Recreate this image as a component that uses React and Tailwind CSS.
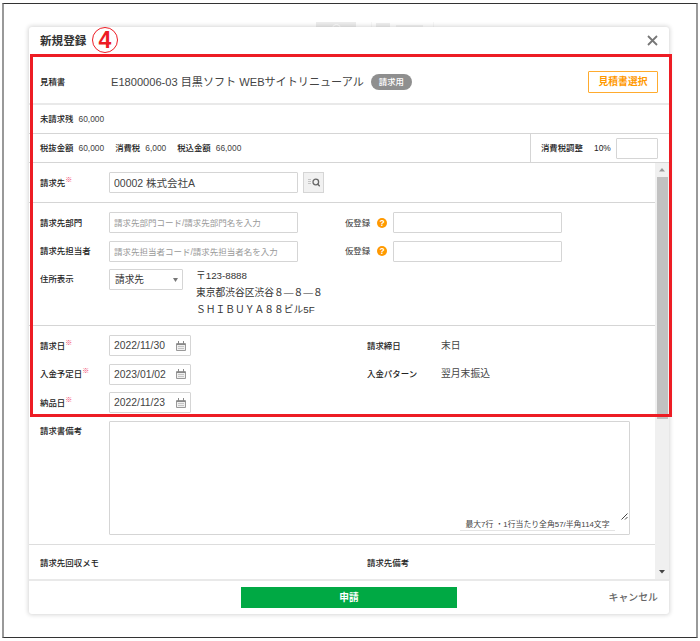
function Label({ children, required, className = "w-[69px]" }) {
  return (
    <div className={`flex shrink-0 text-[8.45px] font-medium leading-[12px] text-[#222] ${className}`}>
      {children}
      {required && <span className="-mt-[3px] text-[7px] font-bold text-[#f0436a]">※</span>}
    </div>
  );
}

function TextBox({ value, placeholder, className }) {
  return (
    <input
      type="text"
      defaultValue={value}
      placeholder={placeholder}
      className={`block h-[21px] shrink-0 rounded-[1px] border border-[#d5d5d5] bg-white px-1 text-[#444] outline-none placeholder:text-[8.5px] placeholder:text-[#999] ${className}`}
    />
  );
}

function CalendarIcon() {
  return (
    <svg width="10" height="10" viewBox="0 0 10 10" className="shrink-0">
      <path d="M0.5 2.5h9v7h-9z" fill="#efefef" stroke="#999" />
      <path d="M0.5 3.5h9M2.5 0v3M7.5 0v3" stroke="#888" />
      <path d="M2 5.5h6M2 7.5h6" stroke="#c4c4c4" />
    </svg>
  );
}

function DateBox({ value }) {
  return (
    <div className="flex h-[21px] w-[82px] shrink-0 items-center justify-between rounded-[1px] border border-[#d5d5d5] pl-1 pr-[4px] text-[10.35px] leading-[19px] text-[#444]">
      {value}
      <CalendarIcon />
    </div>
  );
}

function HelpIcon() {
  return (
    <span className="ml-[7px] flex size-[10px] shrink-0 items-center justify-center rounded-full bg-[#f90] text-[8.5px] font-bold leading-[10px] text-white">
      ?
    </span>
  );
}

function TemporaryEntry() {
  return (
    <div className="ml-[47px] flex items-center">
      <span className="w-[25px] whitespace-nowrap text-[8.4px] leading-[12px] text-[#333]">仮登録</span>
      <HelpIcon />
      <TextBox className="ml-[6px] w-[169px] text-[10px]" />
    </div>
  );
}

function Amount({ label, value }) {
  return (
    <div className="flex gap-[5px]">
      <span className="font-medium text-[#222]">{label}</span>
      <span className="text-[#444]">{value}</span>
    </div>
  );
}

function ModalHeader() {
  return (
    <>
      <div className="flex h-[27px] items-center justify-between pl-[11px] pr-[11px]">
        <h1 className="text-[11.6px] font-bold leading-[16px] text-[#333]">新規登録</h1>
        <svg width="11" height="11" viewBox="0 0 11 11">
          <path d="M1 1l9 9M10 1l-9 9" stroke="#777" strokeWidth="1.8" />
        </svg>
      </div>
      <div className="flex h-[51px] items-center border-b-2 border-[#e9e9e9] pl-[11px] pr-[11px] pt-[6px]">
        <Label className="w-[71px]">見積書</Label>
        <div className="text-[11.1px] leading-[16px] text-[#444]">E1800006-03 目黒ソフト WEBサイトリニューアル</div>
        <span className="ml-[7px] h-4 w-[41px] rounded-full bg-[#8f8f8f] text-center text-[8.4px] font-medium leading-4 text-white">
          請求用
        </span>
        <button className="ml-auto h-[22px] w-[70px] rounded-[1px] border border-[#ffab2e] text-[9.8px] font-bold leading-[20px] text-[#f90]">
          見積書選択
        </button>
      </div>
      <div className="flex h-[29px] items-center border-b border-[#d5d5d5] pl-[11px] text-[8.4px] leading-[12px]">
        <Amount label="未請求残" value="60,000" />
      </div>
      <div className="flex h-[29px] border-b border-[#d5d5d5] pl-[11px] text-[8.4px] leading-[12px]">
        <div className="flex w-[490px] items-center gap-[11px]">
          <Amount label="税抜金額" value="60,000" />
          <Amount label="消費税" value="6,000" />
          <Amount label="税込金額" value="66,000" />
        </div>
        <div className="flex flex-1 items-center border-l border-[#d5d5d5] pl-[10px] text-[#222]">
          <span className="w-[53px] font-medium">消費税調整</span>
          <span className="w-[22px]">10%</span>
          <TextBox className="w-[42px] text-[10px]" />
        </div>
      </div>
    </>
  );
}

function FormSections() {
  return (
    <div className="w-[626px]">
      <section className="flex h-10 items-center border-b border-[#d5d5d5] pl-[11px]">
        <Label required>請求先</Label>
        <TextBox value="00002 株式会社A" className="w-[189px] text-[10.5px]" />
        <button className="ml-[5px] flex size-[21px] items-center justify-center border border-[#d5d5d5] bg-[#f1f1f1]">
          <svg width="12" height="9" viewBox="0 0 12 9" fill="none">
            <path d="M0 1.5h3M0 3.5h3M0 5.5h3" stroke="#c4c4c4" />
            <circle cx="7.8" cy="4" r="2.8" stroke="#666" strokeWidth="1.3" />
            <path d="M9.6 6l2.2 2.2" stroke="#666" strokeWidth="1.4" />
          </svg>
        </button>
      </section>

      <section className="flex h-[123px] flex-col gap-[7.5px] border-b border-[#d5d5d5] pl-[11px] pt-[9px]">
        <div className="flex h-[21px] items-center">
          <Label>請求先部門</Label>
          <TextBox placeholder="請求先部門コード/請求先部門名を入力" className="w-[189px] text-[10px]" />
          <TemporaryEntry />
        </div>
        <div className="flex h-[21px] items-center">
          <Label>請求先担当者</Label>
          <TextBox placeholder="請求先担当者コード/請求先担当者名を入力" className="w-[189px] text-[10px]" />
          <TemporaryEntry />
        </div>
        <div className="flex items-start">
          <Label className="w-[69px] pt-[4px]">住所表示</Label>
          <div className="flex h-[21px] w-[74px] items-center justify-between rounded-[1px] border border-[#d5d5d5] pl-[5px] pr-[4px] text-[9.7px] leading-[19px] text-[#333]">
            請求先
            <svg width="5" height="4" viewBox="0 0 5 4">
              <path d="M0 0h5L2.5 4z" fill="#777" />
            </svg>
          </div>
          <address className="-mt-[2px] ml-[13px] text-[9.75px] not-italic leading-[17px] text-[#333]">
            〒123-8888
            <br />
            東京都渋谷区渋谷８―８―８
            <br />
            ＳＨＩＢＵＹＡ８８ビル5F
          </address>
        </div>
      </section>

      <section className="flex h-[219px] flex-col gap-[7.5px] border-b border-[#ddd] pl-[11px] pt-[9px]">
        <div className="flex h-[21px] items-center">
          <Label required>請求日</Label>
          <DateBox value="2022/11/30" />
          <Label className="ml-[176px] w-[74px]">請求締日</Label>
          <span className="text-[9.8px] leading-[14px] text-[#444]">末日</span>
        </div>
        <div className="flex h-[21px] items-center">
          <Label required>入金予定日</Label>
          <DateBox value="2023/01/02" />
          <Label className="ml-[176px] w-[74px]">入金パターン</Label>
          <span className="text-[9.8px] leading-[14px] text-[#444]">翌月末振込</span>
        </div>
        <div className="flex h-[21px] items-center">
          <Label required>納品日</Label>
          <DateBox value="2022/11/23" />
        </div>
        <div className="flex">
          <Label className="w-[69px] pt-[4px]">請求書備考</Label>
          <div className="flex h-[114px] w-[521px] flex-col items-end justify-end rounded-[1px] border border-[#d5d5d5]">
            <svg width="7" height="7" viewBox="0 0 7 7" className="mr-px">
              <path d="M0.5 6.5l6-6M4 6.5l2.5-2.5" stroke="#444" />
            </svg>
            <div className="mb-[3px] mr-[14px] h-[11px] w-[155px] whitespace-nowrap border-b border-[#e4e4e4] text-center text-[7.85px] leading-[10px] text-[#444]">
              最大7行 ・1行当たり全角57/半角114文字
            </div>
          </div>
        </div>
      </section>

      <section className="flex h-[34px] items-center pl-[11px] pt-[2px]">
        <Label className="w-[327px]">請求先回収メモ</Label>
        <Label>請求先備考</Label>
      </section>
    </div>
  );
}

function Scrollbar() {
  return (
    <div className="flex w-[14px] flex-col items-center bg-[#f0f0f0]">
      <div className="flex h-[14px] items-center">
        <svg width="6" height="4" viewBox="0 0 6 4">
          <path d="M0 3.5h6L3 0z" fill="#999" />
        </svg>
      </div>
      <div className="h-[242px] w-[11px] bg-[#c1c1c1]" />
      <div className="mt-auto flex h-[14px] items-center">
        <svg width="6" height="4" viewBox="0 0 6 4">
          <path d="M0 0h6L3 3.5z" fill="#444" />
        </svg>
      </div>
    </div>
  );
}

export default function App() {
  return (
    <div
      lang="ja"
      className="relative h-[641px] w-[700px] overflow-hidden bg-white pl-[2px] pt-[3px] font-['Liberation_Sans','Noto_Sans_CJK_JP',sans-serif]"
    >
      <div className="h-[635px] w-[696px] border-x-2 border-y border-x-[#999] border-y-[#333] pl-[25px]">
        {/* toolbar behind the modal */}
        <div className="flex h-[23px] items-end pl-[287px]">
          <div className="flex h-[5px] w-[40px] justify-center overflow-hidden bg-[#ededed]">
            <span className="mt-[2px] size-[9px] rounded-full border border-white" />
          </div>
          <div className="ml-[15px] flex h-[5px] w-[63px] items-end border-x border-[#f7f7f7] pl-[4px]">
            <span className="h-[4px] w-[14px] bg-[#efefef]" />
            <span className="ml-[6px] h-[2px] w-[27px] bg-[#f3f3f3]" />
          </div>
        </div>

        <div className="relative flex h-[587px] w-[640px] flex-col rounded-[3px] bg-white shadow-[0_0_4px_1px_rgba(0,0,0,0.16)]">
          <ModalHeader />
          <div className="flex h-[416px]">
            <FormSections />
            <Scrollbar />
          </div>
          <footer className="grid flex-1 grid-cols-[1fr_216px_1fr] items-center border-t-2 border-[#e9e9e9]">
            <span />
            <button className="h-[21px] bg-[#00a944] text-[9.7px] font-bold leading-[21px] text-white">申請</button>
            <button className="pr-[11px] text-right text-[9.9px] font-medium leading-[14px] text-[#666]">キャンセル</button>
          </footer>
        </div>
      </div>

      {/* step highlight */}
      <div className="pointer-events-none absolute left-[30px] top-[54px] h-[363px] w-[642px] border-[3px] border-[#ed1c24]" />
      <div className="absolute left-[92px] top-[27px] flex size-[26px] items-center justify-center rounded-full border border-[#ed1c24] text-[23px] font-bold leading-[24px] text-[#ed1c24]">
        4
      </div>
    </div>
  );
}
